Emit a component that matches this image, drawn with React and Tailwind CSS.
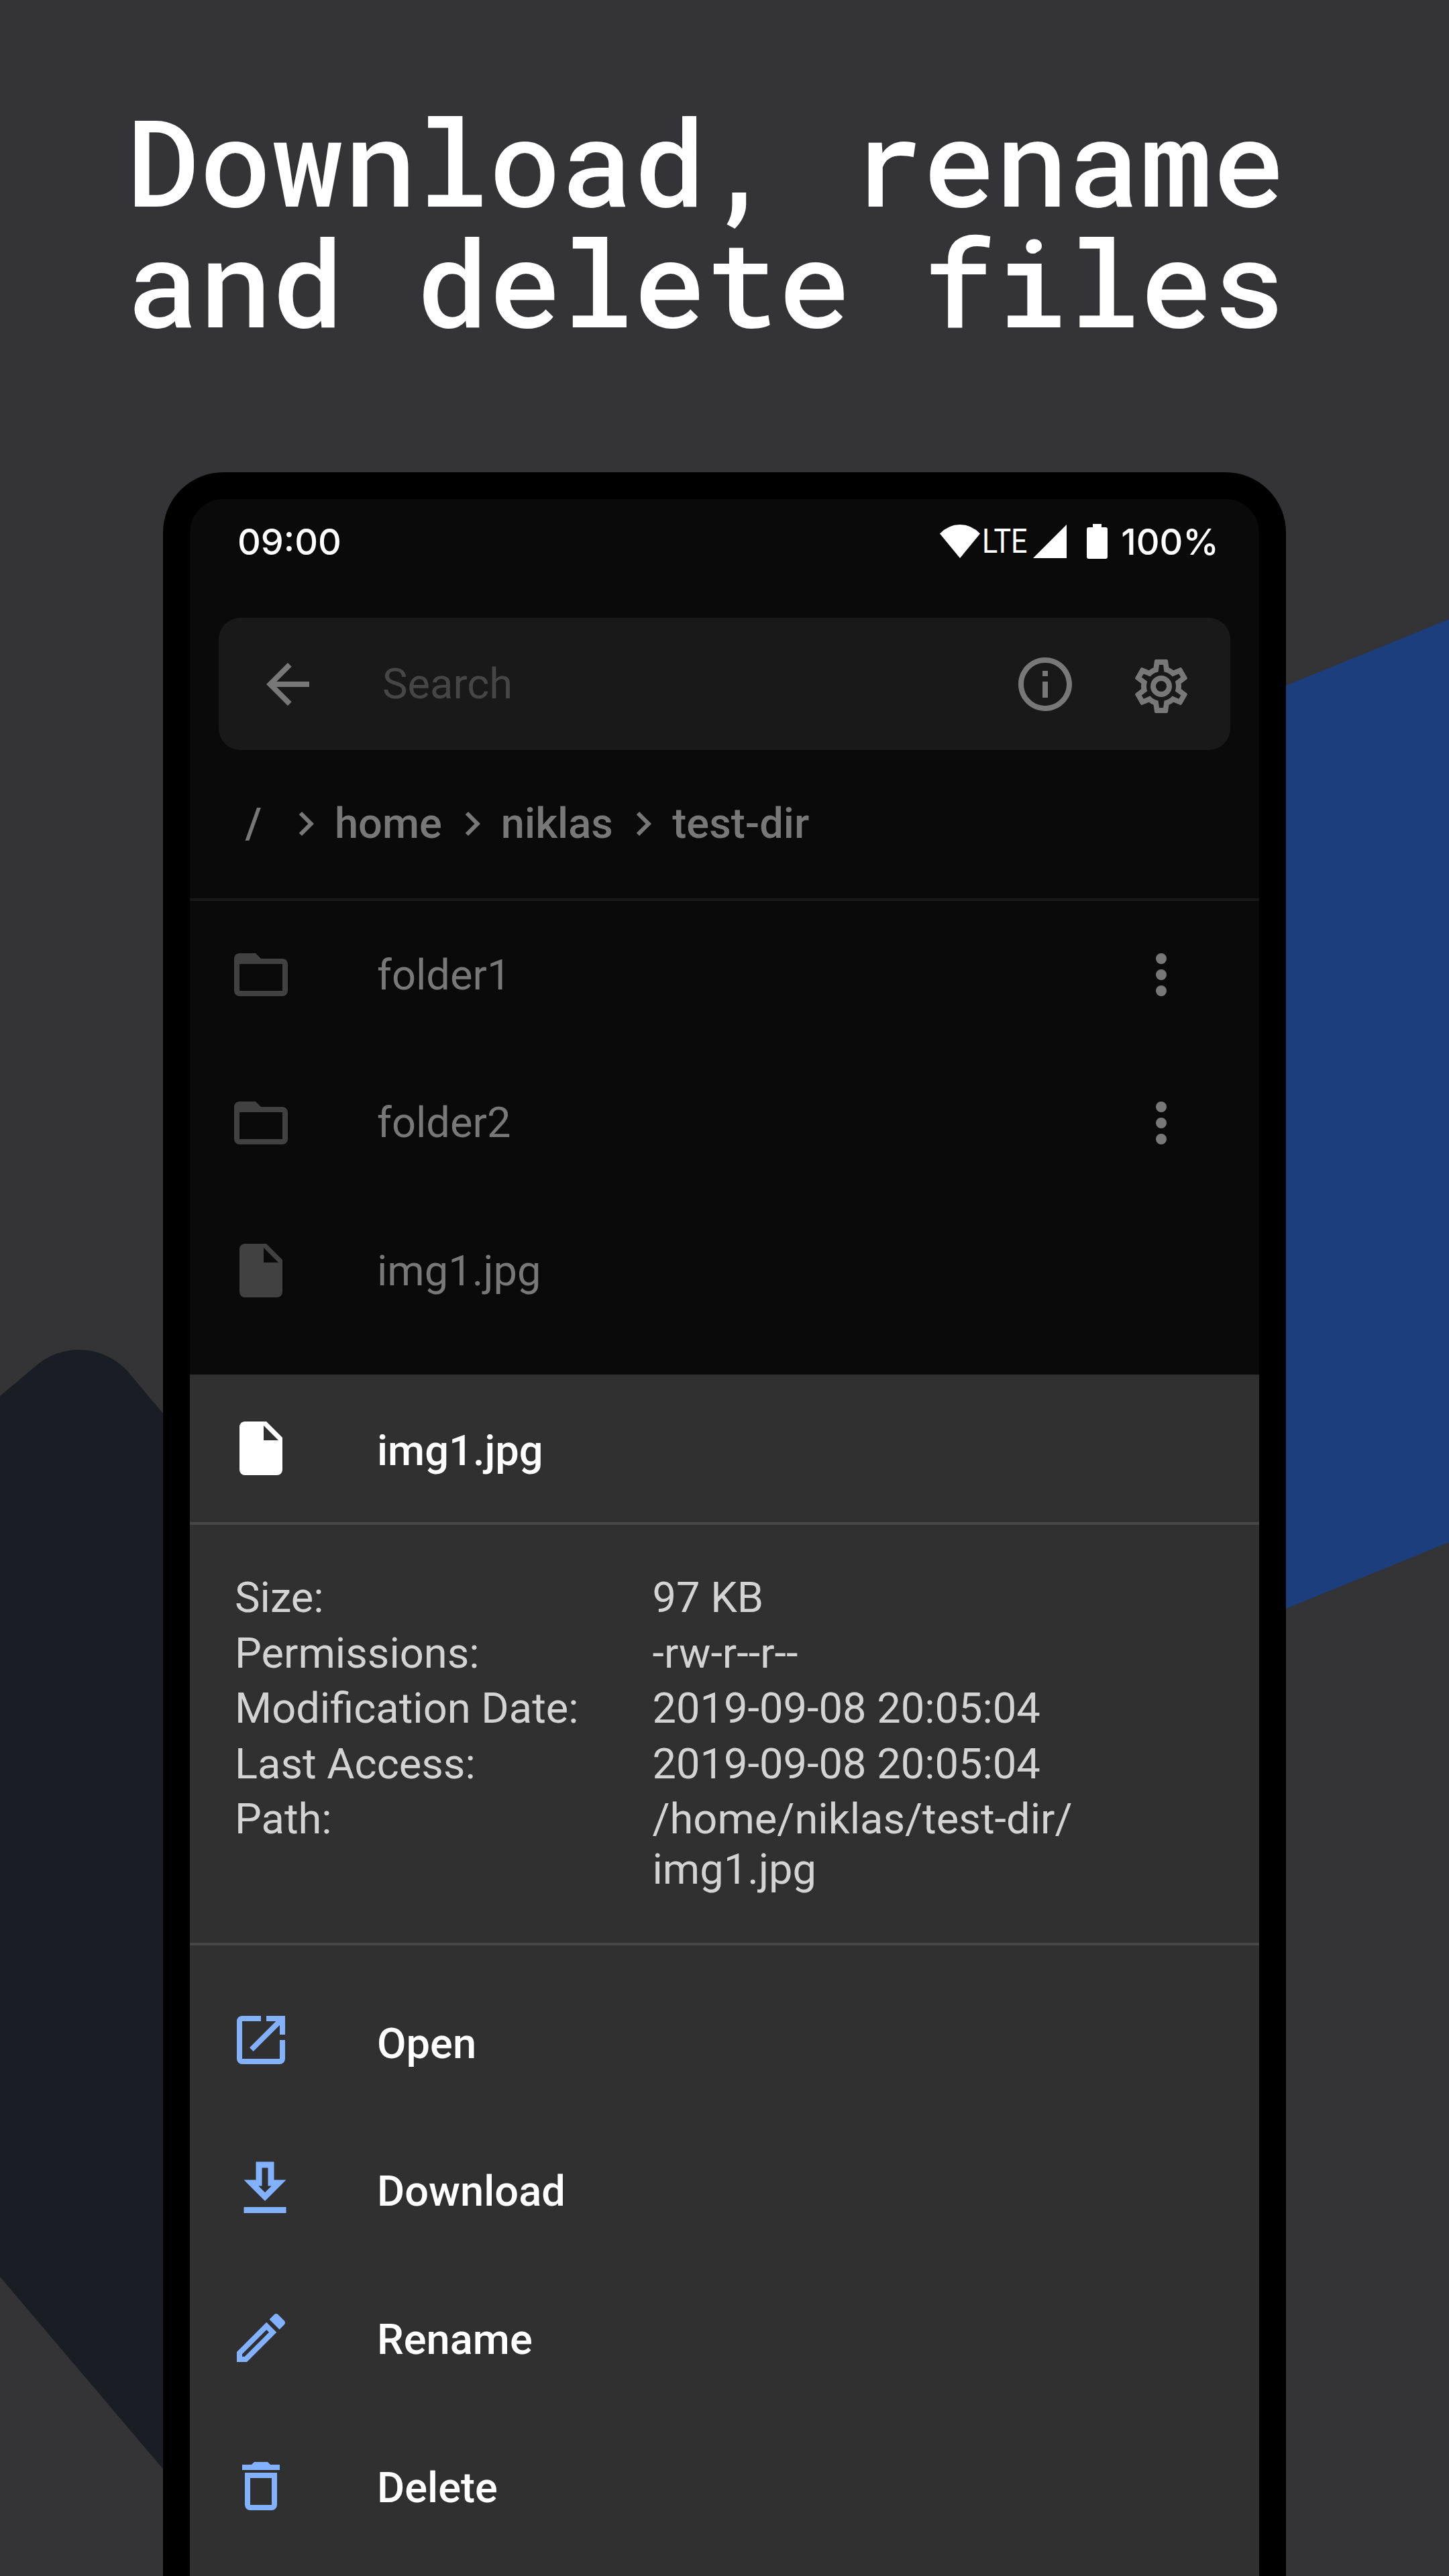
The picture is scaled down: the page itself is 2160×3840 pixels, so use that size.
import React from "react";

const icons = {
  back: "M20 11H7.83l5.59-5.59L12 4l-8 8 8 8 1.41-1.41L7.83 13H20v-2z",
  info: "M11 7h2v2h-2zm0 4h2v6h-2zm1-9C6.48 2 2 6.48 2 12s4.48 10 10 10 10-4.48 10-10S17.52 2 12 2zm0 18c-4.41 0-8-3.59-8-8s3.59-8 8-8 8 3.59 8 8-3.59 8-8 8z",
  cog: "M12,8A4,4 0 0,1 16,12A4,4 0 0,1 12,16A4,4 0 0,1 8,12A4,4 0 0,1 12,8M12,10A2,2 0 0,0 10,12A2,2 0 0,0 12,14A2,2 0 0,0 14,12A2,2 0 0,0 12,10M10,22C9.75,22 9.54,21.82 9.5,21.58L9.13,18.93C8.5,18.68 7.96,18.34 7.44,17.94L4.95,18.95C4.73,19.03 4.46,18.95 4.34,18.73L2.34,15.27C2.21,15.05 2.27,14.78 2.46,14.63L4.57,12.97L4.5,12L4.57,11L2.46,9.37C2.27,9.22 2.21,8.95 2.34,8.73L4.34,5.27C4.46,5.05 4.73,4.96 4.95,5.05L7.44,6.05C7.96,5.66 8.5,5.32 9.13,5.07L9.5,2.42C9.54,2.18 9.75,2 10,2H14C14.25,2 14.46,2.18 14.5,2.42L14.87,5.07C15.5,5.32 16.04,5.66 16.56,6.05L19.05,5.05C19.27,4.96 19.54,5.05 19.66,5.27L21.66,8.73C21.79,8.95 21.73,9.22 21.54,9.37L19.43,11L19.5,12L19.43,13L21.54,14.63C21.73,14.78 21.79,15.05 21.66,15.27L19.66,18.73C19.54,18.95 19.27,19.04 19.05,18.95L16.56,17.95C16.04,18.34 15.5,18.68 14.87,18.93L14.5,21.58C14.46,21.82 14.25,22 14,22H10M11.25,4L10.88,6.61C9.68,6.86 8.62,7.5 7.85,8.39L5.44,7.35L4.69,8.65L6.8,10.2C6.4,11.37 6.4,12.64 6.8,13.8L4.68,15.36L5.43,16.66L7.86,15.62C8.63,16.5 9.68,17.14 10.87,17.38L11.24,20H12.76L13.13,17.39C14.32,17.14 15.37,16.5 16.14,15.62L18.57,16.66L19.32,15.36L17.2,13.81C17.6,12.64 17.6,11.37 17.2,10.2L19.31,8.65L18.56,7.35L16.15,8.39C15.38,7.5 14.32,6.86 13.12,6.62L12.75,4H11.25Z",
  chevron: "M8.59,16.58L13.17,12L8.59,7.41L10,6L16,12L10,18L8.59,16.58Z",
  folder: "M20,18H4V8H20M20,6H12L10,4H4C2.89,4 2,4.89 2,6V18A2,2 0 0,0 4,20H20A2,2 0 0,0 22,18V8C22,6.89 21.1,6 20,6Z",
  file: "M13,9V3.5L18.5,9M6,2C4.89,2 4,2.89 4,4V20A2,2 0 0,0 6,22H18A2,2 0 0,0 20,20V8L14,2H6Z",
  dots: "M12,16A2,2 0 0,1 14,18A2,2 0 0,1 12,20A2,2 0 0,1 10,18A2,2 0 0,1 12,16M12,10A2,2 0 0,1 14,12A2,2 0 0,1 12,14A2,2 0 0,1 10,12A2,2 0 0,1 12,10M12,4A2,2 0 0,1 14,6A2,2 0 0,1 12,8A2,2 0 0,1 10,6A2,2 0 0,1 12,4Z",
  open: "M14,3V5H17.59L7.76,14.83L9.17,16.24L19,6.41V10H21V3M19,19H5V5H12V3H5C3.89,3 3,3.9 3,5V19A2,2 0 0,0 5,21H19A2,2 0 0,0 21,19V12H19V19Z",
  download: "M13,5V11H14.17L12,13.17L9.83,11H11V5H13M15,3H9V9H5L12,16L19,9H15V3M19,18H5V20H19V18Z",
  rename: "M14.06,9L15,9.94L5.92,19H5V18.08L14.06,9M17.66,3C17.41,3 17.15,3.1 16.96,3.29L15.13,5.12L18.88,8.87L20.71,7.04C21.1,6.65 21.1,6 20.71,5.63L18.37,3.29C18.17,3.09 17.92,3 17.66,3M14.06,6.19L3,17.25V21H6.75L17.81,9.94L14.06,6.19Z",
  trash: "M6,19A2,2 0 0,0 8,21H16A2,2 0 0,0 18,19V7H6V19M8,9H16V19H8V9M15.5,4L14.5,3H9.5L8.5,4H5V6H19V4H15.5Z",
};

function Icon({ name, className = "size-24" }) {
  return (
    <svg viewBox="0 0 24 24" fill="currentColor" className={`shrink-0 ${className}`}>
      <path d={icons[name]} />
    </svg>
  );
}

function Backdrop() {
  return (
    <svg viewBox="0 0 2160 3840" className="absolute inset-0 w-[2160px] h-[3840px]">
      <path d="M0 2081L53 2036.5A98 98 0 0 1 191 2045L600 2532V4101L0 3394Z" fill="#1a1d24" />
      <path d="M1500 1192L2160 923V2299L1500 2568Z" fill="#1d3e7c" />
    </svg>
  );
}

function StatusBar() {
  return (
    <div className="flex h-[126px] items-center pl-[71px] pr-[60px] font-['Inter'] text-[54px] font-medium">
      <span>09:00</span>
      <div className="ml-auto flex items-center">
        <svg viewBox="0 0 60 50" className="h-[50px] w-[60px]" fill="#fff">
          <path d="M30 50L0 13.5Q13 0 30 0T60 13.5Z" />
        </svg>
        <span className="ml-[3px] w-[70px] origin-left scale-x-[0.86] font-['Roboto'] text-[50px] font-normal">
          LTE
        </span>
        <svg viewBox="0 0 50 50" className="ml-[6px] size-[50px]" fill="#fff">
          <path d="M50 0V50H0Z" />
        </svg>
        <svg viewBox="0 0 31 52" className="ml-[30px] h-[52px] w-[31px]" fill="#fff">
          <path d="M9 0H22V5H28Q31 5 31 8V49Q31 52 28 52H3Q0 52 0 49V8Q0 5 3 5H9Z" />
        </svg>
        <span className="ml-[20px]">100%</span>
      </div>
    </div>
  );
}

function SearchBar() {
  return (
    <div className="mx-[43px] mt-[51px] flex h-[197px] items-center rounded-[32px] bg-[#191919] pl-[55px] pr-[55px] text-[#787878]">
      <Icon name="back" />
      <span className="ml-[93px] text-[#464646]">Search</span>
      <Icon name="info" className="ml-auto size-24" />
      <Icon name="cog" className="relative top-[3px] ml-[77px] size-24" />
    </div>
  );
}

function Breadcrumbs() {
  return (
    <div className="flex h-[221px] items-center pb-[2px] font-medium text-[#787878]">
      <span className="ml-[82.5px] w-[54.5px]">/</span>
      <Icon name="chevron" className="size-[72px]" />
      <span className="ml-[7px]">home</span>
      <Icon name="chevron" className="ml-[9px] size-[72px]" />
      <span className="ml-[7px]">niklas</span>
      <Icon name="chevron" className="ml-[9px] size-[72px]" />
      <span className="ml-[7.5px]">test-dir</span>
    </div>
  );
}

function FileRow({ icon, name, menu }) {
  return (
    <div className="flex h-[220.6px] items-center pl-[58px] pr-[98px] text-[#787878]">
      <Icon name={icon} className="size-24 text-[#414141]" />
      <span className="ml-[125px]">{name}</span>
      {menu && <Icon name="dots" className="ml-auto size-24" />}
    </div>
  );
}

const details = [
  ["Size:", "97 KB"],
  ["Permissions:", "-rw-r--r--"],
  ["Modification Date:", "2019-09-08 20:05:04"],
  ["Last Access:", "2019-09-08 20:05:04"],
  ["Path:", "/home/niklas/test-dir/\nimg1.jpg"],
];

function ActionSheet() {
  return (
    <div className="h-[1800px] bg-[#303030]">
      <div className="flex h-[220px] items-center pl-[58px] font-medium">
        <Icon name="file" />
        <span className="relative top-[3px] ml-[125px]">img1.jpg</span>
      </div>
      <div className="h-[4px] bg-[#474747]" />
      <dl className="flex h-[623px] flex-col gap-[8px] pl-[67px] pt-[71px] text-[#d3d3d3]">
        {details.map(([label, value]) => (
          <div key={label} className="flex leading-[74.6px]">
            <dt className="w-[622.5px]">{label}</dt>
            <dd className="whitespace-pre">{value}</dd>
          </div>
        ))}
      </dl>
      <div className="h-[4px] bg-[#474747]" />
      <div className="pt-[36px] font-medium">
        <div className="flex h-[220.6px] items-center pl-[58px]">
          <Icon name="open" className="relative -top-[5px] size-24 text-[#82b1ff]" />
          <span className="ml-[125px]">Open</span>
        </div>
        <div className="flex h-[220.6px] items-center pl-[58px]">
          <Icon name="download" className="relative -top-[4px] size-27 text-[#82b1ff]" />
          <span className="ml-[113px]">Download</span>
        </div>
        <div className="flex h-[220.6px] items-center pl-[58px]">
          <Icon name="rename" className="relative -top-[2px] size-24 text-[#82b1ff]" />
          <span className="ml-[125px]">Rename</span>
        </div>
        <div className="flex h-[220.6px] items-center pl-[58px]">
          <Icon name="trash" className="relative -top-[2px] size-24 text-[#82b1ff]" />
          <span className="ml-[125px]">Delete</span>
        </div>
      </div>
    </div>
  );
}

export default function App() {
  return (
    <div className="relative h-[3840px] w-[2160px] overflow-hidden bg-[#343436] font-['Roboto'] text-white">
      <Backdrop />
      <div className="relative flex flex-col items-center">
        <h1 className="h-[704px] w-full whitespace-pre pl-[189px] pt-[149px] font-['Roboto_Mono'] text-[179.8px] font-medium leading-[180px]">
          {"Download, rename\nand delete files"}
        </h1>
        <div className="h-[3300px] w-[1674px] rounded-t-[90px] border-[40px] border-black bg-[#0a0a0a] text-[63.2px] leading-[75px]">
          <StatusBar />
          <SearchBar />
          <Breadcrumbs />
          <div className="h-[4px] bg-[#191919]" />
          <div className="h-[706px] overflow-hidden">
            <FileRow icon="folder" name="folder1" menu />
            <FileRow icon="folder" name="folder2" menu />
            <FileRow icon="file" name="img1.jpg" />
          </div>
          <ActionSheet />
        </div>
      </div>
    </div>
  );
}
